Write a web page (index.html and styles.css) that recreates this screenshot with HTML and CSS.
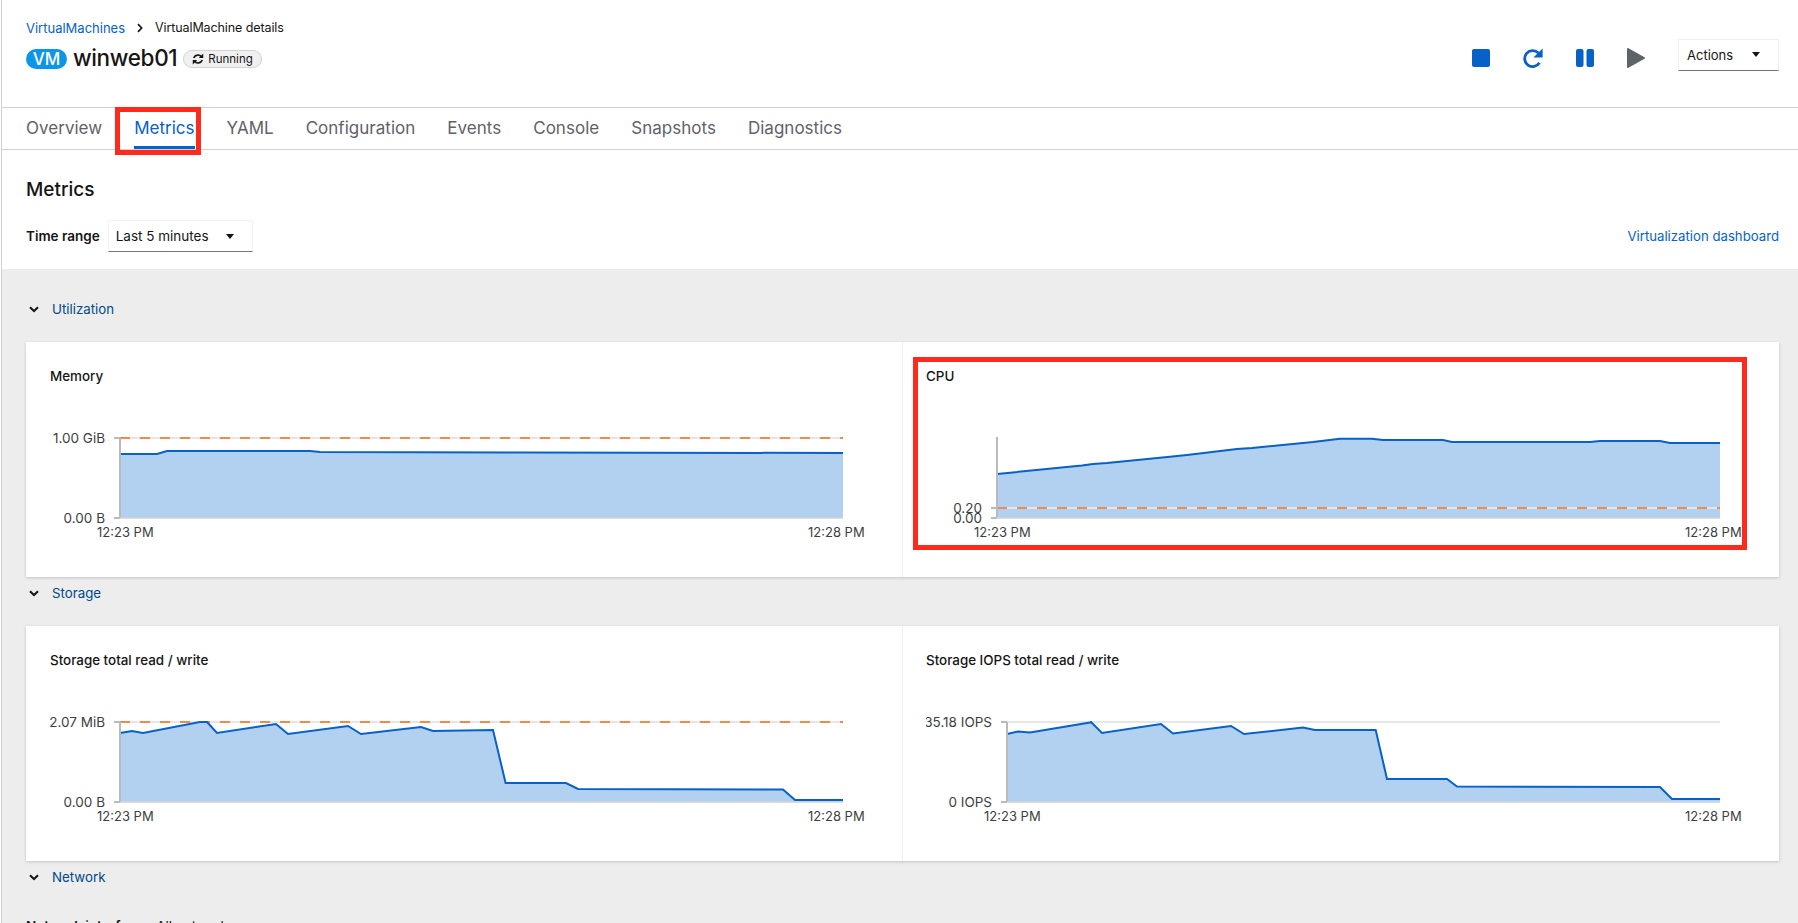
FILE: index.html
```html
<!DOCTYPE html>
<html lang="en">

<head>
    <meta charset="UTF-8">
    <meta name="viewport" content="width=device-width, initial-scale=1.0">
    <title>VirtualMachine details</title>
    <link rel="stylesheet" href="styles.css">
</head>

<body>
    <div class="page">
        <header class="vm-header">
            <div class="vm-info">
                <nav class="breadcrumb">
                    <a href="#">VirtualMachines</a>
                    <svg class="crumb-sep" viewBox="0 0 8 12"><path d="M1.600 1.400 6 6l-4.400 4.600" fill="none" stroke="#151515" stroke-width="2"/></svg>
                    <span class="crumb-current">VirtualMachine details</span>
                </nav>
                <div class="vm-title">
                    <span class="vm-badge">VM</span>
                    <h1>winweb01</h1>
                    <span class="status-pill">
                        <svg viewBox="0 0 16 16">
                            <path d="M12.800 5.200A6 6 0 0 0 2.300 6.600M3.200 10.800A6 6 0 0 0 13.700 9.400" fill="none" stroke="#151515" stroke-width="2.200"/>
                            <path d="M15 .8v6H9zM1 15.200v-6h6z" fill="#151515"/>
                        </svg>
                        Running
                    </span>
                </div>
            </div>
            <div class="vm-actions">
                <svg class="action-icon" viewBox="0 0 18 18"><rect width="18" height="18" rx="2" fill="#0761c6"/></svg>
                <svg class="action-icon action-wide" viewBox="0 0 20 20"><path d="M15.400 5A8 8 0 1 0 16.500 14.800" fill="none" stroke="#0761c6" stroke-width="2.800"/><path d="M19.600 .4v9.200h-9.200z" fill="#0761c6"/></svg>
                <svg class="action-icon" viewBox="0 0 18 18"><rect width="7.500" height="18" rx="2" fill="#0761c6"/><rect x="10.500" width="7.500" height="18" rx="2" fill="#0761c6"/></svg>
                <svg class="action-icon action-play" viewBox="0 0 18 20"><path d="M1.500.2 17.500 9.200a1 1 0 0 1 0 1.600L1.500 19.800a1 1 0 0 1-1.500-1V1.200a1 1 0 0 1 1.500-1z" fill="#5f6267"/></svg>
                <button class="dropdown actions-btn">Actions <i class="caret"></i></button>
            </div>
        </header>

        <nav class="tabs">
            <a href="#">Overview</a>
            <a href="#" class="active">Metrics</a>
            <a href="#">YAML</a>
            <a href="#">Configuration</a>
            <a href="#">Events</a>
            <a href="#">Console</a>
            <a href="#">Snapshots</a>
            <a href="#">Diagnostics</a>
        </nav>

        <section class="metrics-head">
            <h2>Metrics</h2>
            <div class="range-row">
                <label>Time range</label>
                <button class="dropdown range-btn">Last 5 minutes <i class="caret"></i></button>
                <a href="#" class="dash-link">Virtualization dashboard</a>
            </div>
        </section>

        <main class="metrics-body">
            <div class="group-toggle">
                <svg viewBox="0 0 10 7"><path d="M1 1.200 5 5l4-3.800" fill="none" stroke="#151515" stroke-width="2"/></svg>
                <span>Utilization</span>
            </div>
            <div class="card-row">
                <div class="chart-card">
                    <h3>Memory</h3>
                    <svg class="chart" viewBox="24 3 852 177">
                        <line class="grid" x1="94" y1="58" x2="817" y2="58"/>
                        <line class="threshold" x1="94" y1="58" x2="817" y2="58"/>
                        <polygon class="area" points="94,74 131,74 141,71 284,71 294,72 817,73 817,138 94,138"/>
                        <polyline class="line" points="94,74 131,74 141,71 284,71 294,72 500,72.500 817,73"/>
                        <line class="axis" x1="94" y1="58" x2="94" y2="138"/>
                        <line class="base" x1="94" y1="138" x2="817" y2="138"/>
                        <line class="tick" x1="88" y1="58" x2="94" y2="58"/>
                        <line class="tick" x1="88" y1="138" x2="94" y2="138"/>
                        <text class="val" x="79" y="63" text-anchor="end">1.00 GiB</text>
                        <text class="val" x="79" y="143" text-anchor="end">0.00 B</text>
                        <text x="71" y="157">12:23 PM</text>
                        <text x="782" y="157">12:28 PM</text>
                    </svg>
                </div>
                <div class="chart-card">
                    <h3>CPU</h3>
                    <svg class="chart" viewBox="24 3 852 177">
                        <polygon class="area" points="95,94 180,85.500 191,84 205,83 268,76.700 285,75 335,69 350,68 411,62 438,58.700 470,58.700 481,60 541,60 550,62 688,62 698,61 758,61 768,63 818,63 818,138 95,138"/>
                        <polyline class="line" points="95,94 180,85.500 191,84 205,83 268,76.700 285,75 335,69 350,68 411,62 438,58.700 470,58.700 481,60 541,60 550,62 688,62 698,61 758,61 768,63 818,63"/>
                        <line class="grid" x1="95" y1="128" x2="818" y2="128"/>
                        <line class="threshold" x1="95" y1="128" x2="818" y2="128"/>
                        <line class="axis" x1="95" y1="57" x2="95" y2="138"/>
                        <line class="base" x1="95" y1="138" x2="818" y2="138"/>
                        <line class="tick" x1="89" y1="128" x2="95" y2="128"/>
                        <line class="tick" x1="89" y1="138" x2="95" y2="138"/>
                        <text class="val" x="80" y="133" text-anchor="end">0.20</text>
                        <text class="val" x="80" y="143" text-anchor="end">0.00</text>
                        <text x="72" y="157">12:23 PM</text>
                        <text x="783" y="157">12:28 PM</text>
                    </svg>
                </div>
            </div>

            <div class="group-toggle">
                <svg viewBox="0 0 10 7"><path d="M1 1.200 5 5l4-3.800" fill="none" stroke="#151515" stroke-width="2"/></svg>
                <span>Storage</span>
            </div>
            <div class="card-row">
                <div class="chart-card">
                    <h3>Storage total read / write</h3>
                    <svg class="chart" viewBox="24 3 852 177">
                        <line class="grid" x1="94" y1="58" x2="817" y2="58"/>
                        <line class="threshold" x1="94" y1="58" x2="817" y2="58"/>
                        <polygon class="area" points="94,69 106,67 117,69 174,58 181,58 191,69 250,60 262,70 322,62 335,70 395,63 407,67 467,66 479.600,119 540,119 552,125 757,125.500 769,136 817,136 817,138 94,138"/>
                        <polyline class="line" points="94,69 106,67 117,69 174,58 181,58 191,69 250,60 262,70 322,62 335,70 395,63 407,67 467,66 479.600,119 540,119 552,125 757,125.500 769,136 817,136"/>
                        <line class="axis" x1="94" y1="58" x2="94" y2="138"/>
                        <line class="base" x1="94" y1="138" x2="817" y2="138"/>
                        <line class="tick" x1="88" y1="58" x2="94" y2="58"/>
                        <line class="tick" x1="88" y1="138" x2="94" y2="138"/>
                        <text class="val" x="79" y="63" text-anchor="end">2.07 MiB</text>
                        <text class="val" x="79" y="143" text-anchor="end">0.00 B</text>
                        <text x="71" y="157">12:23 PM</text>
                        <text x="782" y="157">12:28 PM</text>
                    </svg>
                </div>
                <div class="chart-card">
                    <h3>Storage IOPS total read / write</h3>
                    <svg class="chart" viewBox="24 3 852 177">
                        <line class="grid" x1="105" y1="58" x2="818" y2="58"/>
                        <polygon class="area" points="105,70 116,67.500 128,68.500 188,58.500 189,58 200,69 259,60 271,69.500 329,62 342,70 401,63.500 413,66 473.700,66 485,115 545,115 555,122.500 758,123 770,135 818,135 818,138 105,138"/>
                        <polyline class="line" points="105,70 116,67.500 128,68.500 188,58.500 189,58 200,69 259,60 271,69.500 329,62 342,70 401,63.500 413,66 473.700,66 485,115 545,115 555,122.500 758,123 770,135 818,135"/>
                        <line class="axis" x1="105" y1="58" x2="105" y2="138"/>
                        <line class="base" x1="105" y1="138" x2="818" y2="138"/>
                        <line class="tick" x1="99" y1="58" x2="105" y2="58"/>
                        <line class="tick" x1="99" y1="138" x2="105" y2="138"/>
                        <text class="val" x="90" y="63" text-anchor="end">235.18 IOPS</text>
                        <text class="val" x="90" y="143" text-anchor="end">0 IOPS</text>
                        <text x="82" y="157">12:23 PM</text>
                        <text x="783" y="157">12:28 PM</text>
                    </svg>
                </div>
            </div>

            <div class="group-toggle">
                <svg viewBox="0 0 10 7"><path d="M1 1.200 5 5l4-3.800" fill="none" stroke="#151515" stroke-width="2"/></svg>
                <span>Network</span>
            </div>
            <div class="net-filter">
                <label>Network interface:</label>
                <span>All networks</span>
            </div>
        </main>

        <div class="callout callout-tab"></div>
        <div class="callout callout-cpu"></div>
    </div>
</body>

</html>
```

FILE: styles.css
```css
/* Global Styles */
* {
    box-sizing: border-box;
    margin: 0;
    padding: 0;
}

html,
body {
    height: 100%;
    overflow: hidden;
}

body {
    font-family: 'Inter', 'Noto Sans', sans-serif;
    background: #fff;
    color: #151515;
    font-size: 14px;
}

a {
    color: #0761c6;
    text-decoration: none;
}

.page {
    position: relative;
    height: 923px;
    margin-left: 1px;
    border-left: 1px solid #d0d0d0;
    overflow: hidden;
}

/* Header */
.vm-header {
    height: 107px;
    padding: 18px 19px 0 24px;
    display: flex;
    justify-content: space-between;
}

.breadcrumb {
    display: flex;
    align-items: center;
    height: 19px;
    font-size: 13px;
}

.crumb-current {
    font-size: 12.500px;
    letter-spacing: -0.1px;
}

.crumb-sep {
    width: 8px;
    height: 10px;
    margin: 0 11px;
}

.vm-title {
    display: flex;
    align-items: center;
    margin-top: 9px;
    height: 26px;
}

.vm-badge {
    width: 41px;
    height: 20px;
    border-radius: 10px;
    background: #0b96ea;
    color: #fff;
    font-size: 17px;
    font-weight: 500;
    text-align: center;
    line-height: 20px;
}

.vm-title h1 {
    font-size: 22.500px;
    font-weight: 500;
    letter-spacing: -0.35px;
    margin: 0 6px 4px;
}

.status-pill {
    display: flex;
    align-items: center;
    gap: 4px;
    height: 18px;
    padding: 0 8px;
    border: 1px solid #d2d2d2;
    border-radius: 9px;
    background: #f0f0f0;
    font-size: 11.500px;
}

.status-pill svg {
    width: 12px;
    height: 12px;
}

.vm-actions {
    display: flex;
    align-items: center;
    gap: 33px;
    height: 32px;
    margin-top: 21px;
}

.action-icon {
    width: 18px;
    height: 18px;
    margin-top: 6px;
}

.action-wide {
    width: 20px;
    height: 20px;
}

.action-play {
    height: 20px;
}

.dropdown {
    display: flex;
    align-items: center;
    justify-content: space-between;
    background: #fff;
    border: 1px solid #f0f0f0;
    border-bottom-color: #72767b;
    font-family: inherit;
    font-size: 13.500px;
    color: #151515;
}

.actions-btn {
    width: 101px;
    height: 32px;
    padding: 0 18px 1px 8px;
    font-size: 13px;
}

.caret {
    width: 0;
    height: 0;
    border-left: 4.500px solid transparent;
    border-right: 4.500px solid transparent;
    border-top: 5px solid #151515;
}

/* Tabs */
.tabs {
    height: 43px;
    border-top: 1px solid #d2d2d2;
    border-bottom: 1px solid #d2d2d2;
    display: flex;
    padding-left: 24px;
    gap: 32px;
}

.tabs a {
    font-size: 17px;
    letter-spacing: 0.02px;
    color: #5f6267;
    line-height: 40px;
    height: 41px;
}

.tabs a.active {
    color: #0761c6;
    border-bottom: 3px solid #0761c6;
}

/* Metrics heading */
.metrics-head {
    height: 119px;
    padding: 26px 19px 0 24px;
}

.metrics-head h2 {
    font-size: 19px;
    font-weight: 500;
    line-height: 27px;
}

.range-row {
    display: flex;
    align-items: center;
    margin-top: 17px;
}

.range-row label {
    font-weight: 600;
    font-size: 13.500px;
    margin-right: 8px;
}

.range-btn {
    width: 145px;
    height: 32px;
    padding: 0 18px 0 7px;
}

.dash-link {
    margin-left: auto;
    font-size: 13.200px;
}

/* Gray section */
.metrics-body {
    background: #ededed;
    height: 654px;
    padding: 26px 19px 0 24px;
}

.group-toggle {
    display: flex;
    align-items: center;
    height: 28px;
    padding-left: 3px;
    gap: 13px;
    color: #004a87;
    font-size: 13.300px;
}

.group-toggle svg {
    width: 10px;
    height: 7px;
}

.card-row {
    display: grid;
    grid-template-columns: 876px 877px;
    background: #fff;
    height: 235px;
    box-shadow: 0 1px 3px rgba(0, 0, 0, 0.18);
    margin: 19px 0 2px;
}

.chart-card {
    padding: 27px 0 0 24px;
}

.chart-card + .chart-card {
    border-left: 1px solid #f0f0f0;
    padding-left: 23px;
}

.chart-card h3 {
    font-size: 13.400px;
    font-weight: 500;
    line-height: 14px;
}

.chart {
    display: block;
    width: 852px;
    height: 177px;
    overflow: hidden;
}

.chart text {
    font-size: 13px;
    fill: #3c3f42;
}

.chart .val {
    font-size: 13.500px;
}

.area {
    fill: #06c;
    fill-opacity: 0.3;
}

.line {
    fill: none;
    stroke: #0761c6;
    stroke-width: 2;
}

.grid {
    stroke: #e6e6e6;
    stroke-width: 2;
}

.threshold {
    stroke: #ec7a2f;
    stroke-width: 2;
    stroke-dasharray: 10 10;
    stroke-opacity: 0.85;
}

.axis {
    stroke: #b8bbbe;
    stroke-width: 2;
}

.base {
    stroke: #d2d2d2;
    stroke-width: 1.500;
}

.tick {
    stroke: #b8bbbe;
    stroke-width: 2;
}

.net-filter {
    display: flex;
    gap: 8px;
    margin-top: 25px;
    font-size: 13.500px;
    line-height: 20px;
}

.net-filter label {
    font-weight: 600;
}

/* Red annotation boxes */
.callout {
    position: absolute;
    border: 5px solid #fe2a1c;
}

.callout-tab {
    left: 113px;
    top: 107px;
    width: 86px;
    height: 48px;
}

.callout-cpu {
    left: 911px;
    top: 357px;
    width: 834px;
    height: 193px;
}
```
